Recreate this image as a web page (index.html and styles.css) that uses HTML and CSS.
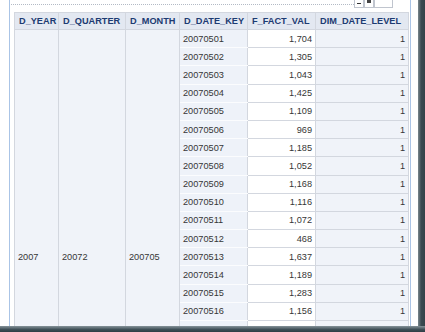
FILE: index.html
```html
<!DOCTYPE html>
<html lang="en">
<head>
  <meta charset="UTF-8" />
  <title>Date fact table</title>
  <link rel="stylesheet" href="styles.css">
</head>
<body>

  <div class="window">
    <div class="pane">
      <div class="frame">
        <div class="toolbar">
          <div class="dots"></div>
          <div class="tool"><span class="min"></span></div>
          <div class="tool"><span class="sq"></span></div>
          <div class="tool wide"></div>
        </div>

        <table class="grid">
          <colgroup>
            <col class="c-year">
            <col class="c-quarter">
            <col class="c-month">
            <col class="c-key">
            <col class="c-val">
            <col class="c-level">
          </colgroup>
          <thead>
            <tr>
              <th>D_YEAR</th>
              <th>D_QUARTER</th>
              <th>D_MONTH</th>
              <th>D_DATE_KEY</th>
              <th>F_FACT_VAL</th>
              <th>DIM_DATE_LEVEL</th>
            </tr>
          </thead>
          <tbody>
            <tr>
              <td class="merged" rowspan="25">2007</td>
              <td class="merged" rowspan="25">20072</td>
              <td class="merged" rowspan="25">200705</td>
              <td class="key">20070501</td><td class="num val">1,704</td><td class="num">1</td>
            </tr>
            <tr><td class="key">20070502</td><td class="num val">1,305</td><td class="num">1</td></tr>
            <tr><td class="key">20070503</td><td class="num val">1,043</td><td class="num">1</td></tr>
            <tr><td class="key">20070504</td><td class="num val">1,425</td><td class="num">1</td></tr>
            <tr><td class="key">20070505</td><td class="num val">1,109</td><td class="num">1</td></tr>
            <tr><td class="key">20070506</td><td class="num val">969</td><td class="num">1</td></tr>
            <tr><td class="key">20070507</td><td class="num val">1,185</td><td class="num">1</td></tr>
            <tr><td class="key">20070508</td><td class="num val">1,052</td><td class="num">1</td></tr>
            <tr><td class="key">20070509</td><td class="num val">1,168</td><td class="num">1</td></tr>
            <tr><td class="key">20070510</td><td class="num val">1,116</td><td class="num">1</td></tr>
            <tr><td class="key">20070511</td><td class="num val">1,072</td><td class="num">1</td></tr>
            <tr><td class="key">20070512</td><td class="num val">468</td><td class="num">1</td></tr>
            <tr><td class="key">20070513</td><td class="num val">1,637</td><td class="num">1</td></tr>
            <tr><td class="key">20070514</td><td class="num val">1,189</td><td class="num">1</td></tr>
            <tr><td class="key">20070515</td><td class="num val">1,283</td><td class="num">1</td></tr>
            <tr><td class="key">20070516</td><td class="num val">1,156</td><td class="num">1</td></tr>
            <tr><td class="key">20070517</td><td class="num val">1,290</td><td class="num">1</td></tr>
            <tr><td class="key">20070518</td><td class="num val">1,211</td><td class="num">1</td></tr>
            <tr><td class="key">20070519</td><td class="num val">1,004</td><td class="num">1</td></tr>
            <tr><td class="key">20070520</td><td class="num val">512</td><td class="num">1</td></tr>
            <tr><td class="key">20070521</td><td class="num val">1,598</td><td class="num">1</td></tr>
            <tr><td class="key">20070522</td><td class="num val">1,244</td><td class="num">1</td></tr>
            <tr><td class="key">20070523</td><td class="num val">1,177</td><td class="num">1</td></tr>
            <tr><td class="key">20070524</td><td class="num val">1,130</td><td class="num">1</td></tr>
            <tr><td class="key">20070525</td><td class="num val">1,062</td><td class="num">1</td></tr>
          </tbody>
        </table>
      </div>
    </div>
    <div class="edge"></div>
  </div>

  <div class="status"></div>

</body>
</html>
```

FILE: styles.css
```css
:root {
  --head-bg: #e3e8f1;
  --head-text: #1d3b72;
  --cell-bg: #f0f3f9;
  --line: #d3d7df;
  --frame: #aac4e6;
  --text: #363636;
}

* {
  margin: 0;
  padding: 0;
  box-sizing: border-box;
}

html, body {
  width: 425px;
  height: 332px;
  overflow: hidden;
}

body {
  font-family: 'Liberation Sans', Arial, sans-serif;
  background: #fff;
  color: var(--text);
  display: flex;
  flex-direction: column;
}

.window {
  flex: 1;
  display: flex;
  min-height: 0;
}

.pane {
  flex: 1;
  overflow: hidden;
  background: #fff;
}

.frame {
  margin-left: 9px;
  width: 402px;
  height: 100%;
  border-left: 1px solid var(--frame);
  border-right: 1px solid var(--frame);
  padding: 0 2px 0 4px;
}

.toolbar {
  height: 12px;
  display: flex;
  align-items: flex-start;
  margin-left: -3px;
}

.dots {
  flex: 1;
  height: 5px;
  border-bottom: 1px dotted #b3bac5;
}

.tool {
  width: 10px;
  height: 9px;
  border: 1px solid #c0c5ce;
  border-top: none;
  margin-top: -1px;
  position: relative;
  background: #fff;
}

.tool.wide {
  width: 19px;
  margin-right: 15px;
}

.tool .min {
  position: absolute;
  left: 2px;
  right: 2px;
  top: 4px;
  height: 1px;
  background: #333;
}

.tool .sq {
  position: absolute;
  left: 2px;
  top: 0;
  width: 4px;
  height: 4px;
  background: #444;
}

.grid {
  border-collapse: collapse;
  table-layout: fixed;
  width: 394px;
  font-size: 9.2px;
}

.c-year { width: 44px; }
.c-quarter { width: 67px; }
.c-month { width: 54px; }
.c-key { width: 68px; }
.c-val { width: 68px; }
.c-level { width: 93px; }

.grid th,
.grid td {
  border: 1px solid var(--line);
  padding: 0 3px;
  white-space: nowrap;
  overflow: hidden;
}

.grid th {
  height: 17px;
  background: var(--head-bg);
  color: var(--head-text);
  font-weight: bold;
  text-align: left;
  padding-left: 4px;
}

.grid tbody tr { height: 18.2px; }

.grid td {
  background: var(--cell-bg);
}

.grid td.merged {
  vertical-align: middle;
}

.grid td.key {
  background: #eef2f9;
  border-top-color: #fbfcfe;
  border-bottom-color: #fbfcfe;
}

.grid td.num { text-align: right; }

.grid td.val { background: #fff; }

.edge {
  width: 7px;
  background: linear-gradient(90deg, #7b888e, #3a4a52 45%, #34434a);
}

.status {
  height: 6px;
  background: linear-gradient(#86939a, #3d4d55 60%, #2f3d44);
}
```
